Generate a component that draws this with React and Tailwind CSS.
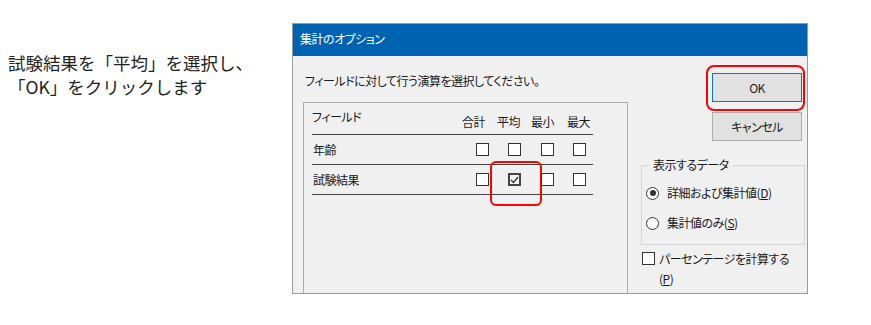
import React from "react";

const jp = "font-['Noto_Sans_CJK_JP',sans-serif]";
const palt = "[font-feature-settings:'palt']";

const Box = ({ checked = false }) => (
  <div
    className={`w-[13px] h-[13px] shrink-0 flex items-center justify-center ${
      checked ? "border-2 border-[#444] bg-[#f4f4f4]" : "border border-[#333] bg-white"
    }`}
  >
    {checked && (
      <svg width="9" height="8" viewBox="0 0 9 8">
        <polyline points="1,4 3.5,6.5 8,1" fill="none" stroke="#333" strokeWidth="1.2" />
      </svg>
    )}
  </div>
);

const Radio = ({ on = false }) => (
  <div className="w-[13px] h-[13px] shrink-0 rounded-full border border-[#333] bg-white flex items-center justify-center">
    {on && <div className="w-[6px] h-[6px] rounded-full bg-[#333]" />}
  </div>
);

// checkbox left offsets inside the field table: 164, 196, 229, 261
const boxGaps = ["ml-[0px]", "ml-[19px]", "ml-[20px]", "ml-[19px]"];
const headGaps = ["ml-[0px]", "ml-[12px]", "ml-[11px]", "ml-[13px]"];

const rows = [
  { name: "年齢", checks: [false, false, false, false] },
  { name: "試験結果", checks: [false, true, false, false], mark: 1 },
];

export default function App() {
  return (
    <div className={`flex w-[871px] h-[325px] bg-white text-[#1a1a1a] ${jp}`}>
      {/* caption */}
      <div className="w-[292px] shrink-0 pl-[8px] pt-[51px] text-[17.5px] leading-[24px] text-[#222]">
        試験結果を「平均」を選択し、
        <br />
        「OK」をクリックします
      </div>

      {/* dialog */}
      <div
        className={`mt-[23px] w-[516px] h-[271px] shrink-0 border border-[#9a9a9a] bg-[#f0f0f0] flex flex-col text-[12px] tracking-[-0.5px] whitespace-nowrap ${palt}`}
      >
        <div className="h-[32px] bg-[#0063b1] text-white flex items-center pl-[7px] pb-[2px]">
          集計のオプション
        </div>

        <div className="flex flex-1">
          {/* left */}
          <div className="w-[334px] shrink-0 pl-[10px] flex flex-col">
            <div className="pt-[16px] leading-[18px] pl-[2px]">
              フィールドに対して行う演算を選択してください。
            </div>
            <div className="mt-[12px] flex-1 w-[325px] border-l border-t border-r border-[#adadad]">
              <div className="ml-[8px] w-[281px]">
                <div className="h-[32px] flex border-b border-[#444]">
                  <div className="w-[150px] shrink-0 pt-[5px] leading-[18px]">フィールド</div>
                  {["合計", "平均", "最小", "最大"].map((h, i) => (
                    <div key={h} className={`${headGaps[i]} shrink-0 pt-[10px] leading-[18px]`}>
                      {h}
                    </div>
                  ))}
                </div>
                {rows.map((r) => (
                  <div key={r.name} className="h-[30px] flex items-center border-b border-[#444]">
                    <div className="w-[164px] shrink-0 pl-[1px]">{r.name}</div>
                    {r.checks.map((c, i) => (
                      <div key={i} className={`${boxGaps[i]} relative`}>
                        <Box checked={c} />
                        {r.mark === i && (
                          <div className="absolute left-[-18px] right-[-21px] top-[-12px] bottom-[-20px] border-2 border-[#ff0000] rounded-[6px]" />
                        )}
                      </div>
                    ))}
                  </div>
                ))}
              </div>
            </div>
          </div>

          {/* right */}
          <div className="w-[178px] flex flex-col">
            <div className="relative ml-[85px] mt-[17px] w-[90px]">
              <button className="w-[90px] h-[29px] border border-[#0078d7] bg-[#e1e1e1]">
                OK
              </button>
              <div className="absolute left-[-6px] right-[-3px] top-[-8px] bottom-[-9px] border-2 border-[#ff0000] rounded-[8px]" />
            </div>
            <button className="ml-[85px] mt-[10px] w-[90px] h-[29px] border border-[#adadad] bg-[#e1e1e1]">
              キャンセル
            </button>

            <fieldset className="ml-[14px] mt-[15px] w-[164px] border border-[#d5d5d5] pl-[4px] pb-[12px]">
              <legend className="ml-[3px] px-[4px] leading-[18px]">表示するデータ</legend>
              <div className="mt-[10px] h-[18px] flex items-center gap-[8px]">
                <Radio on />
                <span>
                  詳細および集計値(<span className="underline">D</span>)
                </span>
              </div>
              <div className="mt-[12px] h-[18px] flex items-center gap-[8px]">
                <Radio />
                <span>
                  集計値のみ(<span className="underline">S</span>)
                </span>
              </div>
            </fieldset>

            <div className="ml-[15px] mt-[4px] flex items-start gap-[4px]">
              <div className="mt-[3px]">
                <Box />
              </div>
              <div className="leading-[20px]">
                パーセンテージを計算する
                <br />
                (<span className="underline">P</span>)
              </div>
            </div>
          </div>
        </div>
      </div>
    </div>
  );
}
